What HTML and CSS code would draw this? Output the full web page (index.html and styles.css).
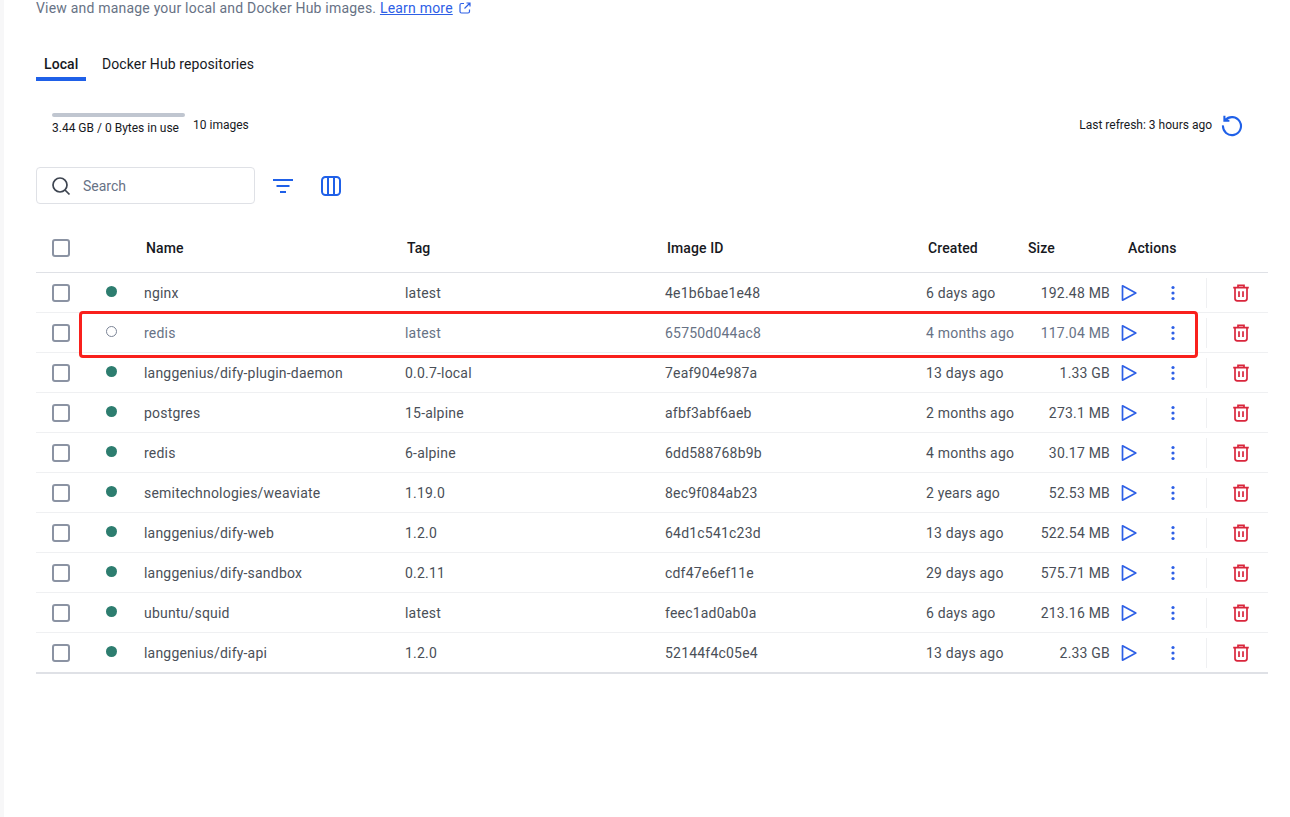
FILE: index.html
```html
<!DOCTYPE html>
<html lang="en">
<head>
    <meta charset="UTF-8">
    <title>Images</title>
    <link rel="stylesheet" href="styles.css">
</head>
<body>
    <svg class="defs" width="0" height="0" aria-hidden="true">
        <symbol id="play" viewBox="0 0 18 18"><path d="M2.5 1.8 L15.8 9 L2.5 16.2 Z" fill="none" stroke="currentColor" stroke-width="1.7" stroke-linejoin="round"/></symbol>
        <symbol id="more" viewBox="0 0 18 18"><circle cx="9" cy="3.5" r="1.6"/><circle cx="9" cy="9" r="1.6"/><circle cx="9" cy="14.5" r="1.6"/></symbol>
        <symbol id="trash" viewBox="0 0 18 18"><path d="M1.2 3.7 H16.8 M6 3.5 V1.3 H12 V3.5 M3 3.7 V14.5 Q3 16.8 5.3 16.8 H12.7 Q15 16.8 15 14.5 V3.7 M7 7.2 V13 M11 7.2 V13" fill="none" stroke="currentColor" stroke-width="1.7"/></symbol>
    </svg>
    <main class="page">
        <p class="intro">View and manage your local and Docker Hub images. <a href="#">Learn more</a>
            <svg class="ext" width="12" height="12" viewBox="0 0 12 12"><path d="M5 1.5 H2.5 Q1 1.5 1 3 V9.5 Q1 11 2.5 11 H9 Q10.5 11 10.5 9.5 V7.5 M7.5 1 H11 V4.5 M11 1 L5.5 6.5" fill="none" stroke="currentColor" stroke-width="1.2"/></svg>
        </p>

        <div class="tabs">
            <div class="tab active">Local</div>
            <div class="tab">Docker Hub repositories</div>
        </div>

        <div class="stats">
            <div class="usage">
                <div class="usage-bar"></div>
                <div>3.44 GB / 0 Bytes in use</div>
            </div>
            <div class="count">10 images</div>
            <div class="refresh">
                <span>Last refresh: 3 hours ago</span>
                <svg width="24" height="24" viewBox="0 0 24 24"><path d="M5.2 7.2 A9 9 0 1 1 3 12.4 M4.4 2.8 V7.8 H9.4" fill="none" stroke="currentColor" stroke-width="2.1"/></svg>
            </div>
        </div>

        <div class="toolbar">
            <div class="search">
                <svg width="20" height="20" viewBox="0 0 20 20"><circle cx="9" cy="9" r="7" fill="none" stroke="currentColor" stroke-width="1.7"/><path d="M14 14 L18.5 18.5" stroke="currentColor" stroke-width="1.7"/></svg>
                <span>Search</span>
            </div>
            <svg class="tool-filter" width="20" height="14" viewBox="0 0 20 14"><path d="M0 1 H20 M3.5 7 H16.5 M7 13 H13" stroke="currentColor" stroke-width="2"/></svg>
            <svg class="tool-cols" width="20" height="20" viewBox="0 0 20 20"><rect x="1" y="1" width="18" height="18" rx="3.5" fill="none" stroke="currentColor" stroke-width="2"/><path d="M7 1 V19 M13 1 V19" stroke="currentColor" stroke-width="2"/></svg>
        </div>

        <div class="table">
            <div class="row head">
                <div class="cell-check"><span class="checkbox"></span></div>
                <div></div>
                <div class="th">Name</div>
                <div class="th">Tag</div>
                <div class="th">Image ID</div>
                <div class="th">Created</div>
                <div class="th">Size</div>
                <div class="th th-actions">Actions</div>
            </div>
            <div class="row">
                <div class="cell-check"><span class="checkbox"></span></div>
                <div class="cell-dot"><span class="dot"></span></div>
                <div class="td">nginx</div><div class="td">latest</div><div class="td">4e1b6bae1e48</div><div class="td">6 days ago</div><div class="td size">192.48 MB</div>
                <div class="act play"><svg><use href="#play"/></svg></div><div class="act more"><svg><use href="#more"/></svg></div><div class="act trash"><svg><use href="#trash"/></svg></div>
            </div>
            <div class="row unused">
                <div class="cell-check"><span class="checkbox"></span></div>
                <div class="cell-dot"><span class="dot off"></span></div>
                <div class="td">redis</div><div class="td">latest</div><div class="td">65750d044ac8</div><div class="td">4 months ago</div><div class="td size">117.04 MB</div>
                <div class="act play"><svg><use href="#play"/></svg></div><div class="act more"><svg><use href="#more"/></svg></div><div class="act trash"><svg><use href="#trash"/></svg></div>
            </div>
            <div class="row">
                <div class="cell-check"><span class="checkbox"></span></div>
                <div class="cell-dot"><span class="dot"></span></div>
                <div class="td">langgenius/dify-plugin-daemon</div><div class="td">0.0.7-local</div><div class="td">7eaf904e987a</div><div class="td">13 days ago</div><div class="td size">1.33 GB</div>
                <div class="act play"><svg><use href="#play"/></svg></div><div class="act more"><svg><use href="#more"/></svg></div><div class="act trash"><svg><use href="#trash"/></svg></div>
            </div>
            <div class="row">
                <div class="cell-check"><span class="checkbox"></span></div>
                <div class="cell-dot"><span class="dot"></span></div>
                <div class="td">postgres</div><div class="td">15-alpine</div><div class="td">afbf3abf6aeb</div><div class="td">2 months ago</div><div class="td size">273.1 MB</div>
                <div class="act play"><svg><use href="#play"/></svg></div><div class="act more"><svg><use href="#more"/></svg></div><div class="act trash"><svg><use href="#trash"/></svg></div>
            </div>
            <div class="row">
                <div class="cell-check"><span class="checkbox"></span></div>
                <div class="cell-dot"><span class="dot"></span></div>
                <div class="td">redis</div><div class="td">6-alpine</div><div class="td">6dd588768b9b</div><div class="td">4 months ago</div><div class="td size">30.17 MB</div>
                <div class="act play"><svg><use href="#play"/></svg></div><div class="act more"><svg><use href="#more"/></svg></div><div class="act trash"><svg><use href="#trash"/></svg></div>
            </div>
            <div class="row">
                <div class="cell-check"><span class="checkbox"></span></div>
                <div class="cell-dot"><span class="dot"></span></div>
                <div class="td">semitechnologies/weaviate</div><div class="td">1.19.0</div><div class="td">8ec9f084ab23</div><div class="td">2 years ago</div><div class="td size">52.53 MB</div>
                <div class="act play"><svg><use href="#play"/></svg></div><div class="act more"><svg><use href="#more"/></svg></div><div class="act trash"><svg><use href="#trash"/></svg></div>
            </div>
            <div class="row">
                <div class="cell-check"><span class="checkbox"></span></div>
                <div class="cell-dot"><span class="dot"></span></div>
                <div class="td">langgenius/dify-web</div><div class="td">1.2.0</div><div class="td">64d1c541c23d</div><div class="td">13 days ago</div><div class="td size">522.54 MB</div>
                <div class="act play"><svg><use href="#play"/></svg></div><div class="act more"><svg><use href="#more"/></svg></div><div class="act trash"><svg><use href="#trash"/></svg></div>
            </div>
            <div class="row">
                <div class="cell-check"><span class="checkbox"></span></div>
                <div class="cell-dot"><span class="dot"></span></div>
                <div class="td">langgenius/dify-sandbox</div><div class="td">0.2.11</div><div class="td">cdf47e6ef11e</div><div class="td">29 days ago</div><div class="td size">575.71 MB</div>
                <div class="act play"><svg><use href="#play"/></svg></div><div class="act more"><svg><use href="#more"/></svg></div><div class="act trash"><svg><use href="#trash"/></svg></div>
            </div>
            <div class="row">
                <div class="cell-check"><span class="checkbox"></span></div>
                <div class="cell-dot"><span class="dot"></span></div>
                <div class="td">ubuntu/squid</div><div class="td">latest</div><div class="td">feec1ad0ab0a</div><div class="td">6 days ago</div><div class="td size">213.16 MB</div>
                <div class="act play"><svg><use href="#play"/></svg></div><div class="act more"><svg><use href="#more"/></svg></div><div class="act trash"><svg><use href="#trash"/></svg></div>
            </div>
            <div class="row last">
                <div class="cell-check"><span class="checkbox"></span></div>
                <div class="cell-dot"><span class="dot"></span></div>
                <div class="td">langgenius/dify-api</div><div class="td">1.2.0</div><div class="td">52144f4c05e4</div><div class="td">13 days ago</div><div class="td size">2.33 GB</div>
                <div class="act play"><svg><use href="#play"/></svg></div><div class="act more"><svg><use href="#more"/></svg></div><div class="act trash"><svg><use href="#trash"/></svg></div>
            </div>
            <!-- red annotation drawn over the second row -->
            <div class="callout"></div>
        </div>
    </main>
</body>
</html>
```

FILE: styles.css
```css
* {
    box-sizing: border-box;
}
body {
    margin: 0;
    height: 817px;
    overflow: hidden;
    background-color: #ffffff;
    font-family: Roboto, Arial, sans-serif;
    font-size: 14px;
    color: #17191e;
    border-left: 4px solid #f7f7f8;
}
.defs {
    position: absolute;
}
.page {
    padding: 0 22px 0 32px;
}
.intro {
    margin: 0;
    height: 16px;
    line-height: 16px;
    color: #677285;
    letter-spacing: 0.2px;
}
.intro a {
    color: #2e60e6;
}
.ext {
    color: #2e60e6;
    margin-left: 3px;
    vertical-align: -1px;
}
.tabs {
    display: flex;
    margin-top: 32px;
    height: 33px;
}
.tab {
    padding: 8px 8px 0;
    margin-right: 8px;
    line-height: 16px;
    letter-spacing: 0.1px;
}
.tab.active {
    font-weight: 500;
    border-bottom: 4px solid #1f60e8;
    width: 50px;
    text-align: center;
}
.stats {
    display: flex;
    margin-top: 32px;
    padding-left: 16px;
    height: 32px;
    font-size: 12px;
    line-height: 16px;
}
.usage-bar {
    width: 133px;
    height: 4px;
    border-radius: 2px;
    background-color: #c0c6d0;
    margin-bottom: 3px;
}
.count {
    margin: 4px 0 0 8px;
}
.refresh {
    margin-left: auto;
    margin-right: 24px;
    display: flex;
    align-items: center;
    gap: 8px;
    color: #17191e;
    height: 24px;
}
.refresh svg {
    color: #1f60e8;
}
.toolbar {
    display: flex;
    align-items: center;
    margin-top: 22px;
    height: 37px;
}
.search {
    width: 219px;
    height: 37px;
    border: 1px solid #dfe1e6;
    border-radius: 4px;
    display: flex;
    align-items: center;
    padding-left: 14px;
    color: #677285;
}
.search svg {
    color: #3d4450;
    margin-right: 12px;
}
.tool-filter {
    color: #1f60e8;
    margin-left: 18px;
}
.tool-cols {
    color: #1f60e8;
    margin-left: 28px;
}
.table {
    position: relative;
    margin-top: 20px;
}
.row {
    display: grid;
    grid-template-columns: 50px 50px 261px 260px 261px 100px 100px 22px 66px 62px;
    height: 40px;
    align-items: center;
    border-bottom: 1px solid #eff0f2;
}
.row.head {
    height: 49px;
    border-bottom: 1px solid #dfe1e6;
}
.row.last {
    border-bottom: 2px solid #dfe1e6;
    height: 41px;
}
.th {
    font-weight: 500;
    padding-left: 10px;
    letter-spacing: 0.1px;
}
.th-actions {
    grid-column: 8 / 11;
}
.td {
    padding-left: 8px;
    color: #4a4f58;
    white-space: nowrap;
    letter-spacing: 0.2px;
}
.unused .td {
    color: #677285;
}
.td.size {
    padding: 0 8px 0 0;
    text-align: right;
}
.cell-check, .cell-dot, .act {
    display: flex;
    justify-content: center;
    align-items: center;
}
.checkbox {
    width: 18px;
    height: 18px;
    border: 2px solid #8b93a3;
    border-radius: 3px;
}
.dot {
    width: 11px;
    height: 11px;
    border-radius: 50%;
    background-color: #2d7d6f;
    margin-top: -3px;
}
.dot.off {
    background-color: transparent;
    border: 1px solid #7b8496;
}
.act svg {
    width: 18px;
    height: 18px;
}
.play, .more {
    color: #2e60e6;
    fill: #2e60e6;
}
.trash {
    color: #d9263c;
    height: 30px;
    border-left: 1px solid #eff0f2;
    justify-content: flex-start;
    padding-left: 25px;
}
.callout {
    position: absolute;
    left: 43px;
    top: 87px;
    width: 1119px;
    height: 47px;
    border: 3px solid #f9201c;
    border-radius: 4px;
    pointer-events: none;
}
```
